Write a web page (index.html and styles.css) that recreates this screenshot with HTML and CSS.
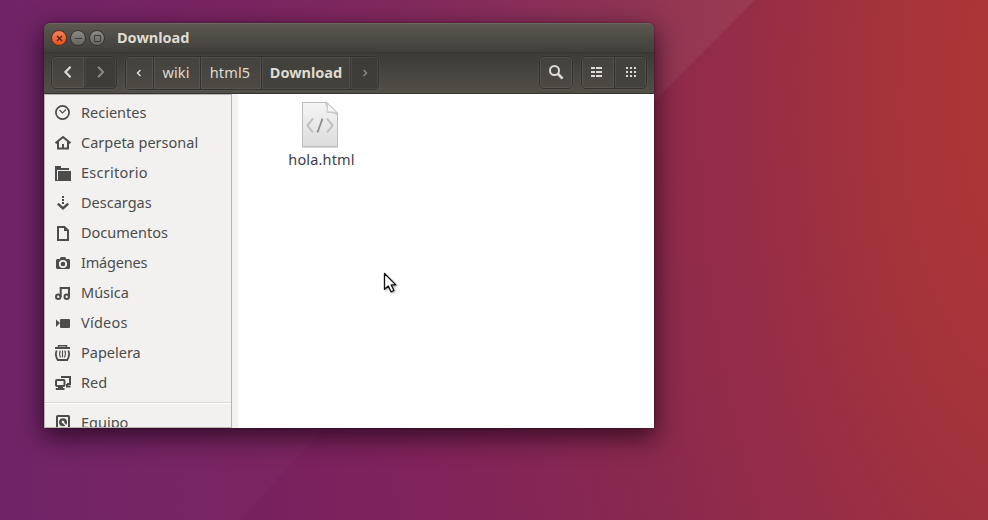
FILE: index.html
```html
<!DOCTYPE html>
<html lang="es">
<head>
<meta charset="utf-8">
<title>Download</title>
<link rel="stylesheet" href="styles.css">
</head>
<body>
<svg class="facets" width="988" height="520" viewBox="0 0 988 520" aria-hidden="true">
  <defs><linearGradient id="facet"><stop stop-color="#fff" stop-opacity="0"/><stop offset=".4" stop-color="#c0c8b0" stop-opacity=".025"/><stop offset="1" stop-color="#cfd0c0" stop-opacity=".08"/></linearGradient></defs>
  <path d="M0 0H755L660 95L320 432L240 520H0Z" fill="url(#facet)"/>
</svg>
<div class="window">
  <header class="titlebar">
    <span class="ctl close"><svg width="15" height="15" viewBox="0 0 15 15"><path d="M5 5l5 5M10 5l-5 5" stroke="#5b2413" stroke-width="1.4"/></svg></span>
    <span class="ctl"><svg width="15" height="15" viewBox="0 0 15 15"><path d="M4 7.5h7" stroke="#3c3b37"/></svg></span>
    <span class="ctl"><svg width="15" height="15" viewBox="0 0 15 15"><path d="M4.500 4.500h6v6h-6z" fill="none" stroke="#3c3b37"/></svg></span>
    <h1 class="title">Download</h1>
  </header>
  <nav class="toolbar">
    <div class="group">
      <span class="btn w32"><svg width="16" height="16" viewBox="0 0 16 16"><path d="M10.500 2.800L5.500 8l5 5.200" fill="none" stroke="#dfdbd2" stroke-width="2.200"/></svg></span>
      <span class="btn w32 off"><svg width="16" height="16" viewBox="0 0 16 16"><path d="M5 2.800L10 8l-5 5.200" fill="none" stroke="#898782" stroke-width="2.200"/></svg></span>
    </div>
    <div class="group path">
      <span class="btn w27"><svg width="8" height="8" viewBox="0 0 8 8"><path d="M4.500 1L1.500 4l3 3" fill="none" stroke="#dfdbd2" stroke-width="1.500"/></svg></span>
      <span class="btn w47"><span class="label">wiki</span></span>
      <span class="btn w61"><span class="label">html5</span></span>
      <span class="btn w89 on"><span class="label">Download</span></span>
      <span class="btn w28 off"><svg width="8" height="8" viewBox="0 0 8 8"><path d="M2.500 1l3 3-3 3" fill="none" stroke="#898782" stroke-width="1.500"/></svg></span>
    </div>
    <div class="group search">
      <span class="btn w32"><svg width="16" height="16" viewBox="0 0 16 16" fill="none" stroke="#dfdbd2"><circle cx="6.500" cy="6.500" r="4.500" stroke-width="2"/><path d="M10 10l4.600 4.600" stroke-width="2.600"/></svg></span>
    </div>
    <div class="group">
      <span class="btn w32"><svg width="14" height="12" viewBox="0 0 14 12" fill="#dfdbd2"><path d="M0 1h4v2H0zM5 1h6v2H5zM0 5h4v2H0zM5 5h6v2H5zM0 9h4v2H0zM5 9h6v2H5z"/></svg></span>
      <span class="btn w32 on"><svg width="12" height="12" viewBox="0 0 12 12" fill="#dfdbd2"><path d="M1 1h2v2H1zM5 1h2v2H5zM9 1h2v2H9zM1 5h2v2H1zM5 5h2v2H5zM9 5h2v2H9zM1 9h2v2H1zM5 9h2v2H5zM9 9h2v2H9z"/></svg></span>
    </div>
  </nav>
  <div class="body">
    <aside class="sidebar">
      <div class="row"><svg class="ico" viewBox="0 0 16 16"><circle cx="7.500" cy="7.500" r="6.600" fill="none" stroke="#4c4c4c" stroke-width="1.700"/><path d="M4.500 5l3 3 3.500-3.500" fill="none" stroke="#4c4c4c" stroke-width="1.100"/></svg><span class="name">Recientes</span></div>
      <div class="row"><svg class="ico" viewBox="0 0 16 16"><path d="M.5 8.200L8 2l7.500 6.200" fill="none" stroke="#4c4c4c" stroke-width="2"/><path d="M3 7v6.500h10V7" fill="none" stroke="#4c4c4c" stroke-width="2"/><path d="M7 9h2v4H7z" fill="#4c4c4c"/></svg><span class="name">Carpeta personal</span></div>
      <div class="row"><svg class="ico" viewBox="0 0 16 16" fill="#4c4c4c"><path d="M0 1h6v2h8v2H2v11H0z"/><path d="M3 6h13v10H1v-1h2z"/></svg><span class="name wide">Escritorio</span></div>
      <div class="row"><svg class="ico" viewBox="0 0 16 16" fill="#4c4c4c"><path d="M7 1h2v2H7zM7 4h2v2H7zM7 7h2v2H7z"/><path d="M2.800 8.600L8 13.400l5.200-4.800" fill="none" stroke="#4c4c4c" stroke-width="2.400"/></svg><span class="name">Descargas</span></div>
      <div class="row"><svg class="ico" viewBox="0 0 16 16"><path d="M3 2h6.500L13 5.500V15H3z" fill="none" stroke="#4c4c4c" stroke-width="2"/><path d="M9 2v4h4z" fill="#4c4c4c"/></svg><span class="name">Documentos</span></div>
      <div class="row"><svg class="ico" viewBox="0 0 16 16"><path d="M2 4h3V3l1-1h4l1 1v1h3l1 1v8l-1 1H2l-1-1V5z" fill="#4c4c4c"/><circle cx="8" cy="9" r="3.200" fill="none" stroke="#f2f1f0" stroke-width="1.800"/></svg><span class="name tight">Imágenes</span></div>
      <div class="row"><svg class="ico" viewBox="0 0 16 16" fill="none" stroke="#4c4c4c" stroke-width="2"><circle cx="3.200" cy="11.700" r="2.200"/><circle cx="11.700" cy="11.700" r="2.200"/><path d="M5.700 12V3H14v9"/></svg><span class="name">Música</span></div>
      <div class="row"><svg class="ico" viewBox="0 0 16 16" fill="#4c4c4c"><path d="M1 4.500l4 3.500-4 4z"/><rect x="5" y="4" width="10" height="9" rx="1"/></svg><span class="name wide">Vídeos</span></div>
      <div class="row"><svg class="ico" viewBox="0 0 16 16" fill="none" stroke="#4c4c4c"><path d="M0 3h15" stroke-width="2"/><path d="M3.500 2.500V.7h8v1.800" stroke-width="1.400"/><path d="M1.700 5.500C.6 8 .8 12 2.800 15h9.400C14.200 12 14.400 8 13.300 5.500" stroke-width="1.800"/><path d="M5.300 5.500c-1 2-1 4.500.2 7M9.700 5.500c1 2 1 4.500-.2 7M7.500 5.500v7" stroke-width="1.100"/></svg><span class="name">Papelera</span></div>
      <div class="row"><svg class="ico" viewBox="0 0 16 16" fill="none" stroke="#4c4c4c" stroke-width="2"><path d="M7 3V2h8v7h-3"/><rect x="1" y="5" width="8.500" height="6" rx="1"/><path d="M3 11.500h5v1.500h1.500v2H.8v-2H3z" fill="#4c4c4c" stroke="none"/><path d="M12 9v2.500h3.500" stroke-width="2"/></svg><span class="name">Red</span></div>
      <div class="row after-sep"><svg class="ico" viewBox="0 0 16 16"><rect x="2" y="1" width="12" height="14" rx=".5" fill="none" stroke="#4c4c4c" stroke-width="2"/><circle cx="8" cy="7.300" r="4" fill="#4c4c4c"/><circle cx="8" cy="7" r="1.300" fill="#f2f1f0"/><path d="M8.500 8l4 4" stroke="#f2f1f0" stroke-width="1.200"/></svg><span class="name">Equipo</span></div>
    </aside>
    <main class="files">
      <figure class="file">
        <svg width="40" height="48" viewBox="0 0 40 48">
          <defs><linearGradient id="paper" x2="0" y2="1"><stop stop-color="#f5f5f5"/><stop offset="1" stop-color="#dcdcdc"/></linearGradient></defs>
          <path d="M2.500 1.500H27L37.500 12V45.500H2.500z" fill="url(#paper)" stroke="#bcbcbc"/>
          <path d="M2 46.500h36" stroke="#000" stroke-opacity=".15"/>
          <path d="M25 2.500c2 2 2 6 1.500 9.500 4-.5 7 0 10.500 2v-2L27 2z" fill="#c9c9c9"/>
          <path d="M27 2c1 3 .5 6 0 8.800 3-.3 7 0 10 1.200z" fill="#fcfcfc" stroke="#bbb" stroke-width=".6"/>
          <path d="M13 17.500L7.500 24.500l5.500 7M27 17.500l5.500 7-5.500 7" fill="none" stroke="#bdbdbd" stroke-width="2"/>
          <path d="M22.500 17.500L17.500 31.500" stroke="#8c8c8c" stroke-width="1.800"/>
        </svg>
        <figcaption>hola.html</figcaption>
      </figure>
    </main>
  </div>
</div>
<svg class="pointer" width="18" height="24" viewBox="0 0 18 24"><path d="M1.500 1.500V17.300L5.300 14l2.700 5.800 2.900-1.300L8.300 12.900h4.500z" fill="#fff" stroke="#111" stroke-width="1.300" stroke-linejoin="round"/></svg>
</body>
</html>
```
FILE: styles.css
```css
* { box-sizing: border-box; }
body {
  margin: 0;
  width: 988px;
  height: 520px;
  overflow: hidden;
  padding: 23px 0 0 44px;
  font-family: "Noto Sans", "Open Sans", sans-serif;
  font-size: 14.5px;
  color: #4c4c4c;
  background: radial-gradient(1040px 2200px at 1040px 100px, #ae3734 0%, #ac3636 6%, #a2323c 18%, #962d47 28%, #8a294e 41%, #80235a 60%, #78215f 78%, #702468 100%);
}
svg { display: block; flex: none; }
.facets { position: absolute; left: 0; top: 0; }
.window {
  position: relative;
  width: 610px;
  height: 405px;
  border-radius: 6px 6px 0 0;
  box-shadow: 0 8px 24px 2px rgba(20, 0, 15, .66), 0 0 2px rgba(0, 0, 0, .5);
}
.titlebar {
  height: 29px;
  display: flex;
  align-items: center;
  padding: 0 7px;
  gap: 3px;
  border-radius: 6px 6px 0 0;
  border-top: 1px solid #6b695f;
  background: linear-gradient(#5a584f, #403f3a);
}
.ctl {
  width: 16px;
  height: 16px;
  border-radius: 50%;
  border: 1px solid #34332f;
  background: linear-gradient(#8b8a84, #66655f);
  display: grid;
  place-items: center;
}
.close { background: linear-gradient(#f4835c, #e2521f); border-color: #5b2d1c; }
.title {
  margin: 0 0 2px 9px;
  font-size: 14.5px;
  line-height: 20px;
  font-weight: 700;
  color: #dfdbd2;
}
.toolbar {
  height: 42px;
  display: flex;
  align-items: flex-start;
  padding: 3px 7px 0;
  border-top: 1px solid #383733;
  border-bottom: 1px solid #35342f;
  background: linear-gradient(#3c3b37, #524f47);
}
.group {
  display: flex;
  height: 33px;
  margin-right: 8px;
  border: 1px solid #33322e;
  border-radius: 5px;
  box-shadow: 0 0 0 1px rgba(255, 255, 255, .035);
  overflow: hidden;
}
.path { height: 34px; }
.group:last-child { margin-right: 0; }
.search { margin-left: auto; }
.btn {
  display: flex;
  align-items: center;
  justify-content: center;
  padding-bottom: 1px;
  color: #dfdbd2;
  background: linear-gradient(#43423d, #4d4a43);
  box-shadow: inset 0 0 0 1px rgba(255, 255, 255, .07);
}
.btn + .btn { border-left: 1px solid #33322e; }
.off, .btn.off { background: #3d3c37; border-left-color: #3a3934; }
.on { background: #42413c; font-weight: 700; }
.label { margin-left: -2px; padding-bottom: 1px; letter-spacing: .15px; }
.on .label { margin-left: 0; letter-spacing: 0; }
.w27 { width: 27px; }
.w28 { width: 28px; }
.w32 { width: 32px; }
.w47 { width: 47px; }
.w61 { width: 61px; }
.w89 { width: 89px; }
.body { height: 334px; display: flex; background: #f2f1f0; }
.sidebar {
  width: 188px;
  height: 334px;
  overflow: hidden;
  padding-top: 3px;
  border: 1px solid #b8b4ae;
}
.row { height: 30px; display: flex; align-items: center; padding-left: 10px; gap: 10px; white-space: nowrap; }
.ico { width: 16px; height: 16px; }
.name { padding-bottom: 2px; }
.wide { letter-spacing: .25px; }
.tight { letter-spacing: -.2px; }
.after-sep { height: 40px; padding-top: 10px; background: linear-gradient(#dad8d5 0 1px, #fff 1px 2px, transparent 2px) no-repeat 0 4px; }
.files { flex: 1; margin-left: 6px; background: #fff; }
.file { margin: 7px 0 0 42px; width: 80px; display: flex; flex-direction: column; align-items: center; }
.file figcaption { line-height: 20px; white-space: nowrap; color: #3c4048; letter-spacing: .15px; padding-left: 3px; }
.pointer { position: absolute; left: 383px; top: 272px; filter: drop-shadow(1px 1px 1px rgba(0, 0, 0, .35)); }
```
